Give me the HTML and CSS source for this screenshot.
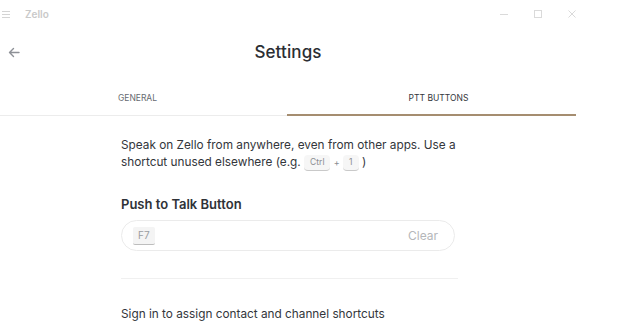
FILE: index.html
```html
<!DOCTYPE html>
<html lang="en">
<head>
    <meta charset="UTF-8">
    <meta name="viewport" content="width=device-width, initial-scale=1.0">
    <title>Zello Settings</title>
    <link rel="stylesheet" href="styles.css">
</head>
<body>
    <div class="titlebar">
        <div class="app">
            <svg class="menu-icon" width="8" height="7" viewBox="0 0 8 7"><path d="M0 .5h8M0 3.5h8M0 6.5h8" stroke="#d4d4d4" stroke-width="1"/></svg>
            <span class="app-name">Zello</span>
        </div>
        <div class="window-controls">
            <svg width="10" height="10" viewBox="0 0 10 10"><path d="M1 5.5h8" stroke="#dadada"/></svg>
            <svg width="10" height="10" viewBox="0 0 10 10"><rect x="1.5" y="1.5" width="7" height="7" fill="none" stroke="#dadada"/></svg>
            <svg width="10" height="10" viewBox="0 0 10 10"><path d="M1.5 1.5l7 7M8.5 1.5l-7 7" stroke="#dadada"/></svg>
        </div>
    </div>

    <div class="page">
        <div class="header">
            <svg class="back" width="12" height="11" viewBox="0 0 12 11"><path d="M11 5.5H1.5M5.5 1.5l-4 4 4 4" fill="none" stroke="#8e9197" stroke-width="1.4" stroke-linecap="round" stroke-linejoin="round"/></svg>
            <h1>Settings</h1>
        </div>

        <div class="tabs">
            <div class="tab">GENERAL</div>
            <div class="tab active">PTT BUTTONS</div>
        </div>

        <div class="content">
            <p class="intro">Speak on Zello from anywhere, even from other apps. Use a shortcut unused elsewhere (e.g. <span class="key">Ctrl</span> <span class="plus">+</span> <span class="key">1</span> )</p>

            <h2>Push to Talk Button</h2>
            <div class="shortcut-field">
                <span class="key big">F7</span>
                <span class="clear">Clear</span>
            </div>

            <hr class="divider">

            <p class="signin">Sign in to assign contact and channel shortcuts</p>
        </div>
    </div>
</body>
</html>
```

FILE: styles.css
```css
* {
    box-sizing: border-box;
}
body {
    margin: 0;
    font-family: Inter, "Noto Sans", sans-serif;
    color: #2f3237;
    background: #fff;
}
.titlebar {
    height: 28px;
    display: flex;
    align-items: center;
    justify-content: space-between;
    padding: 0 49px 0 2px;
}
.app {
    display: flex;
    align-items: center;
    gap: 15px;
}
.app-name {
    font-size: 10px;
    font-weight: 600;
    color: #c9c9c9;
}
.window-controls {
    display: flex;
    gap: 24px;
}
.page {
    width: 576px;
}
.header {
    position: relative;
    height: 44px;
    margin-top: 2px;
    display: flex;
    align-items: center;
    justify-content: center;
}
.back {
    position: absolute;
    left: 8px;
    top: 17px;
}
h1 {
    margin: 0;
    font-size: 17px;
    font-weight: 500;
    color: #2b2e33;
    letter-spacing: 0.1px;
}
.tabs {
    display: flex;
    margin-top: 5px;
}
.tab {
    flex: 1;
    height: 37px;
    display: flex;
    align-items: center;
    justify-content: center;
    font-size: 8.5px;
    color: #666a70;
    border-bottom: 1px solid #ececec;
    padding: 1px 12px 0 0;
}
.tab.active {
    color: #33363b;
    border-bottom: 2px solid #a58d70;
    padding: 2px 0 0 14px;
}
.content {
    padding: 0 121px;
}
.intro {
    margin: 21px 0 0;
    font-size: 11.8px;
    line-height: 17px;
    color: #33363b;
    width: 340px;
}
.key {
    display: inline-block;
    font-size: 8.5px;
    line-height: 11px;
    padding: 2px 6px 2px;
    color: #8a8d92;
    background: #f6f6f6;
    border-radius: 4px;
    border-bottom: 1px solid #c9c9c9;
    vertical-align: 1px;
}
.plus {
    font-size: 9px;
    color: #8a8d92;
}
h2 {
    margin: 25px 0 0;
    font-size: 13px;
    font-weight: 600;
    color: #2f3237;
}
.shortcut-field {
    margin-top: 8px;
    height: 31px;
    width: 334px;
    border: 1px solid #ebebeb;
    border-radius: 16px;
    display: flex;
    align-items: center;
    justify-content: space-between;
    padding: 0 16px 0 11px;
}
.key.big {
    font-size: 10px;
    line-height: 15px;
    padding: 1px 5px 1px;
    color: #9a9da2;
    background: #f4f4f4;
    border-bottom: 1px solid #bdbdbd;
    border-radius: 2px;
    vertical-align: 0;
}
.clear {
    font-size: 12px;
    color: #b5b7ba;
}
.divider {
    margin: 27px 0 0;
    width: 337px;
    border: 0;
    border-top: 1px solid #f0f0f0;
}
.signin {
    margin: 28px 0 0;
    font-size: 11.8px;
    color: #33363b;
}
```
